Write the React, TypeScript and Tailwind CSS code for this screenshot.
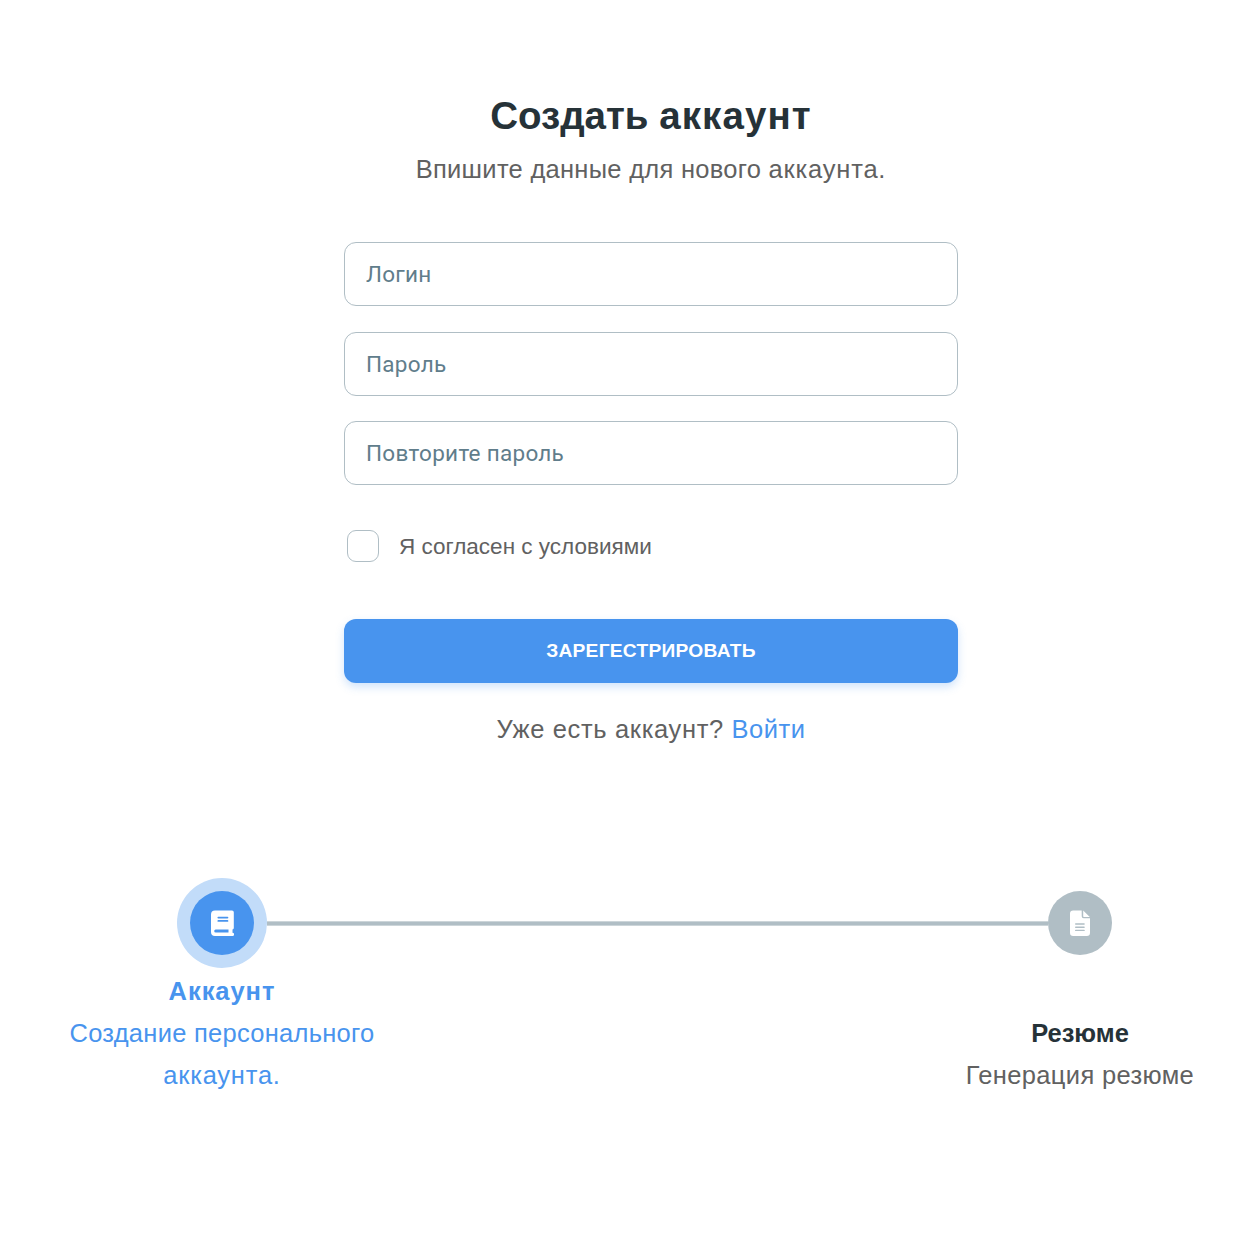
import type { ReactNode } from "react";

function Field({ label, type = "text" }: { label: string; type?: string }) {
  return (
    <input
      type={type}
      placeholder={label}
      className="h-16 w-full rounded-xl border border-[#b0bec5] bg-white px-[21px] font-['Roboto',sans-serif] text-[22.5px] tracking-[0.28px] text-[#455a64] placeholder:text-[#607d8b] placeholder:opacity-100"
    />
  );
}

function Step({ children, className }: { children: ReactNode; className: string }) {
  return <div className={`flex flex-col items-center whitespace-nowrap text-center text-[25.5px] leading-[42px] ${className}`}>{children}</div>;
}

function BookIcon() {
  return (
    <svg viewBox="0 0 23 26" className="h-[26px] w-[23px]" fill="none">
      <path fill="currentColor" fillRule="evenodd" d="M4 .4h17a1.8 1.8 0 0 1 1.8 1.8v15.7a1.8 1.8 0 0 1-1.3 1.7v3.2a1.6 1.6 0 0 1-.1 3.2H4a4 4 0 0 1-4-4V4.4a4 4 0 0 1 4-4Zm.7 19.2a1.5 1.5 0 0 0 0 3H17.5v-3H4.7Z" />
      <path stroke="#4894ee" strokeWidth="1.7" strokeLinecap="round" d="M7.3 7.6h9.2M7.3 10.9h9.2" />
    </svg>
  );
}

function DocumentIcon() {
  return (
    <svg viewBox="0 0 20 26" className="h-[26px] w-5" fill="none">
      <path fill="currentColor" d="M3.2.4h8.5v5.9a2 2 0 0 0 2 2H20v14.5a3.2 3.2 0 0 1-3.2 3.2H3.2A3.2 3.2 0 0 1 0 22.8V3.6A3.2 3.2 0 0 1 3.2.4Zm10 0 6.6 6.6h-5.9a.7.7 0 0 1-.7-.7V.4Z" />
      <path stroke="#b0bec5" strokeWidth="1.4" strokeLinecap="round" d="M5.7 14h8.4M5.7 17.2h8.4M5.7 20.4h8.4" />
    </svg>
  );
}

export default function App() {
  return (
    <main className="h-[1248px] w-[1254px] overflow-hidden bg-white font-['Liberation_Sans',sans-serif] text-[#616161]">
      <section className="ml-[344px] flex w-[614px] flex-col items-center pt-[90px]">
        <h1 className="text-[38.5px] leading-[52px] font-bold text-[#263238]">
          Создать <span className="tracking-[1.1px]">аккаунт</span>
        </h1>
        <p className="mt-1.5 text-[25.5px] leading-[42px] tracking-[0.28px]">
          Впишите данные для нового <span className="tracking-[0.8px]">аккаунта.</span>
        </p>
        <form className="mt-[52px] flex w-full flex-col">
          <div className="flex flex-col gap-[25.6px]">
            <Field label="Логин" />
            <Field label="Пароль" type="password" />
            <Field label="Повторите пароль" type="password" />
          </div>
          <label className="mt-[44.8px] flex items-center gap-5 pl-[3px] text-[22.5px] leading-8">
            <input type="checkbox" className="size-8 appearance-none rounded-[9px] border border-[#b0bec5]" />
            <span className="relative top-px">Я согласен с условиями</span>
          </label>
          <button type="button" className="mt-[57px] h-16 rounded-xl bg-[#4894ee] text-[19.2px] font-bold tracking-[0.25px] text-white shadow-[0_4px_8px_rgba(72,148,238,0.25)]">
            ЗАРЕГЕСТРИРОВАТЬ
          </button>
        </form>
        <p className="mt-[25px] text-[25.5px] leading-[42px] tracking-[0.65px]">
          Уже есть аккаунт? <a href="#" className="tracking-[0.5px] text-[#4894ee]">Войти</a>
        </p>
      </section>
      <section className="mt-32">
        <div className="flex items-center pl-[177px]">
          <div className="flex size-[90px] items-center justify-center rounded-full bg-[#c2dcf9]">
            <div className="flex size-16 items-center justify-center rounded-full bg-[#4894ee] text-white">
              <BookIcon />
            </div>
          </div>
          <div className="mt-px h-[5px] w-[781px] border-y border-[#ccd5d9] bg-[#b0bec5]" />
          <div className="flex size-16 items-center justify-center rounded-full bg-[#b0bec5] text-white">
            <DocumentIcon />
          </div>
        </div>
        <div className="mt-0.5 flex justify-between pr-[54px] pl-[62px]">
          <Step className="w-[320px] text-[#4894ee]">
            <h2 className="font-bold tracking-[0.95px]">Аккаунт</h2>
            <p className="tracking-[0.27px]">Создание персонального</p>
            <p className="tracking-[0.78px]">аккаунта.</p>
          </Step>
          <Step className="w-[240px] pt-[42px]">
            <h2 className="font-bold text-[#263238]">Резюме</h2>
            <p className="tracking-[0.35px]">Генерация резюме</p>
          </Step>
        </div>
      </section>
    </main>
  );
}
